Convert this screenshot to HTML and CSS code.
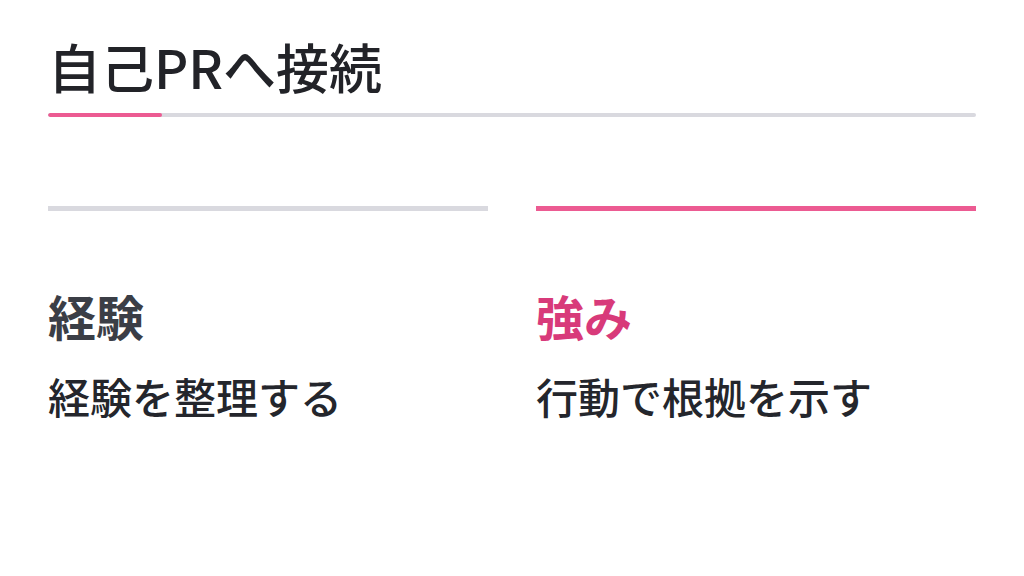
FILE: index.html
```html
<!DOCTYPE html>
<html lang="ja">
<head>
    <meta charset="utf-8">
    <title>自己PRへ接続</title>
    <meta name="viewport" content="width=device-width, initial-scale=1">
    <link rel="stylesheet" href="styles.css">
</head>
<body>

    <div class="page">
        <h1 class="title">自己PRへ接続</h1>

        <div class="progress">
            <div class="progress-fill" style="width: 12.3%"></div>
        </div>

        <div class="steps">
            <div class="step">
                <div class="step-bar"></div>
                <h2 class="step-name">経験</h2>
                <p class="step-text">経験を整理する</p>
            </div>
            <div class="step active">
                <div class="step-bar"></div>
                <h2 class="step-name">強み</h2>
                <p class="step-text">行動で根拠を示す</p>
            </div>
        </div>
    </div>

</body>
</html>
```

FILE: styles.css
```css
* {
    box-sizing: border-box;
}

body {
    margin: 0;
    padding: 0;
    background-color: #fff;
    font-family: "Noto Sans CJK JP", "Noto Sans", sans-serif;
    color: #23252b;
}

.page {
    padding: 31px 48px 0;
}

.title {
    margin: 0;
    height: 70px;
    font-size: 53px;
    line-height: 70px;
    font-weight: 500;
    color: #222328;
}

.progress {
    margin-top: 12px;
    height: 4px;
    border-radius: 2px;
    background-color: #d9d9df;
    overflow: hidden;
}

.progress-fill {
    height: 100%;
    border-radius: 2px;
    background-color: #ec5b92;
}

.steps {
    display: grid;
    grid-template-columns: 1fr 1fr;
    gap: 48px;
    margin-top: 89px;
}

.step-bar {
    height: 5px;
    background-color: #d9d9df;
}

.step.active .step-bar {
    background-color: #ec5b92;
}

.step-name {
    margin: 73px 0 0;
    font-size: 48px;
    line-height: 1.3;
    font-weight: 700;
    color: #3b3e46;
}

.step.active .step-name {
    color: #d83a7a;
}

.step-text {
    margin: 23px 0 0;
    font-size: 42px;
    line-height: 1.3;
    font-weight: 500;
    color: #24262c;
}
```
